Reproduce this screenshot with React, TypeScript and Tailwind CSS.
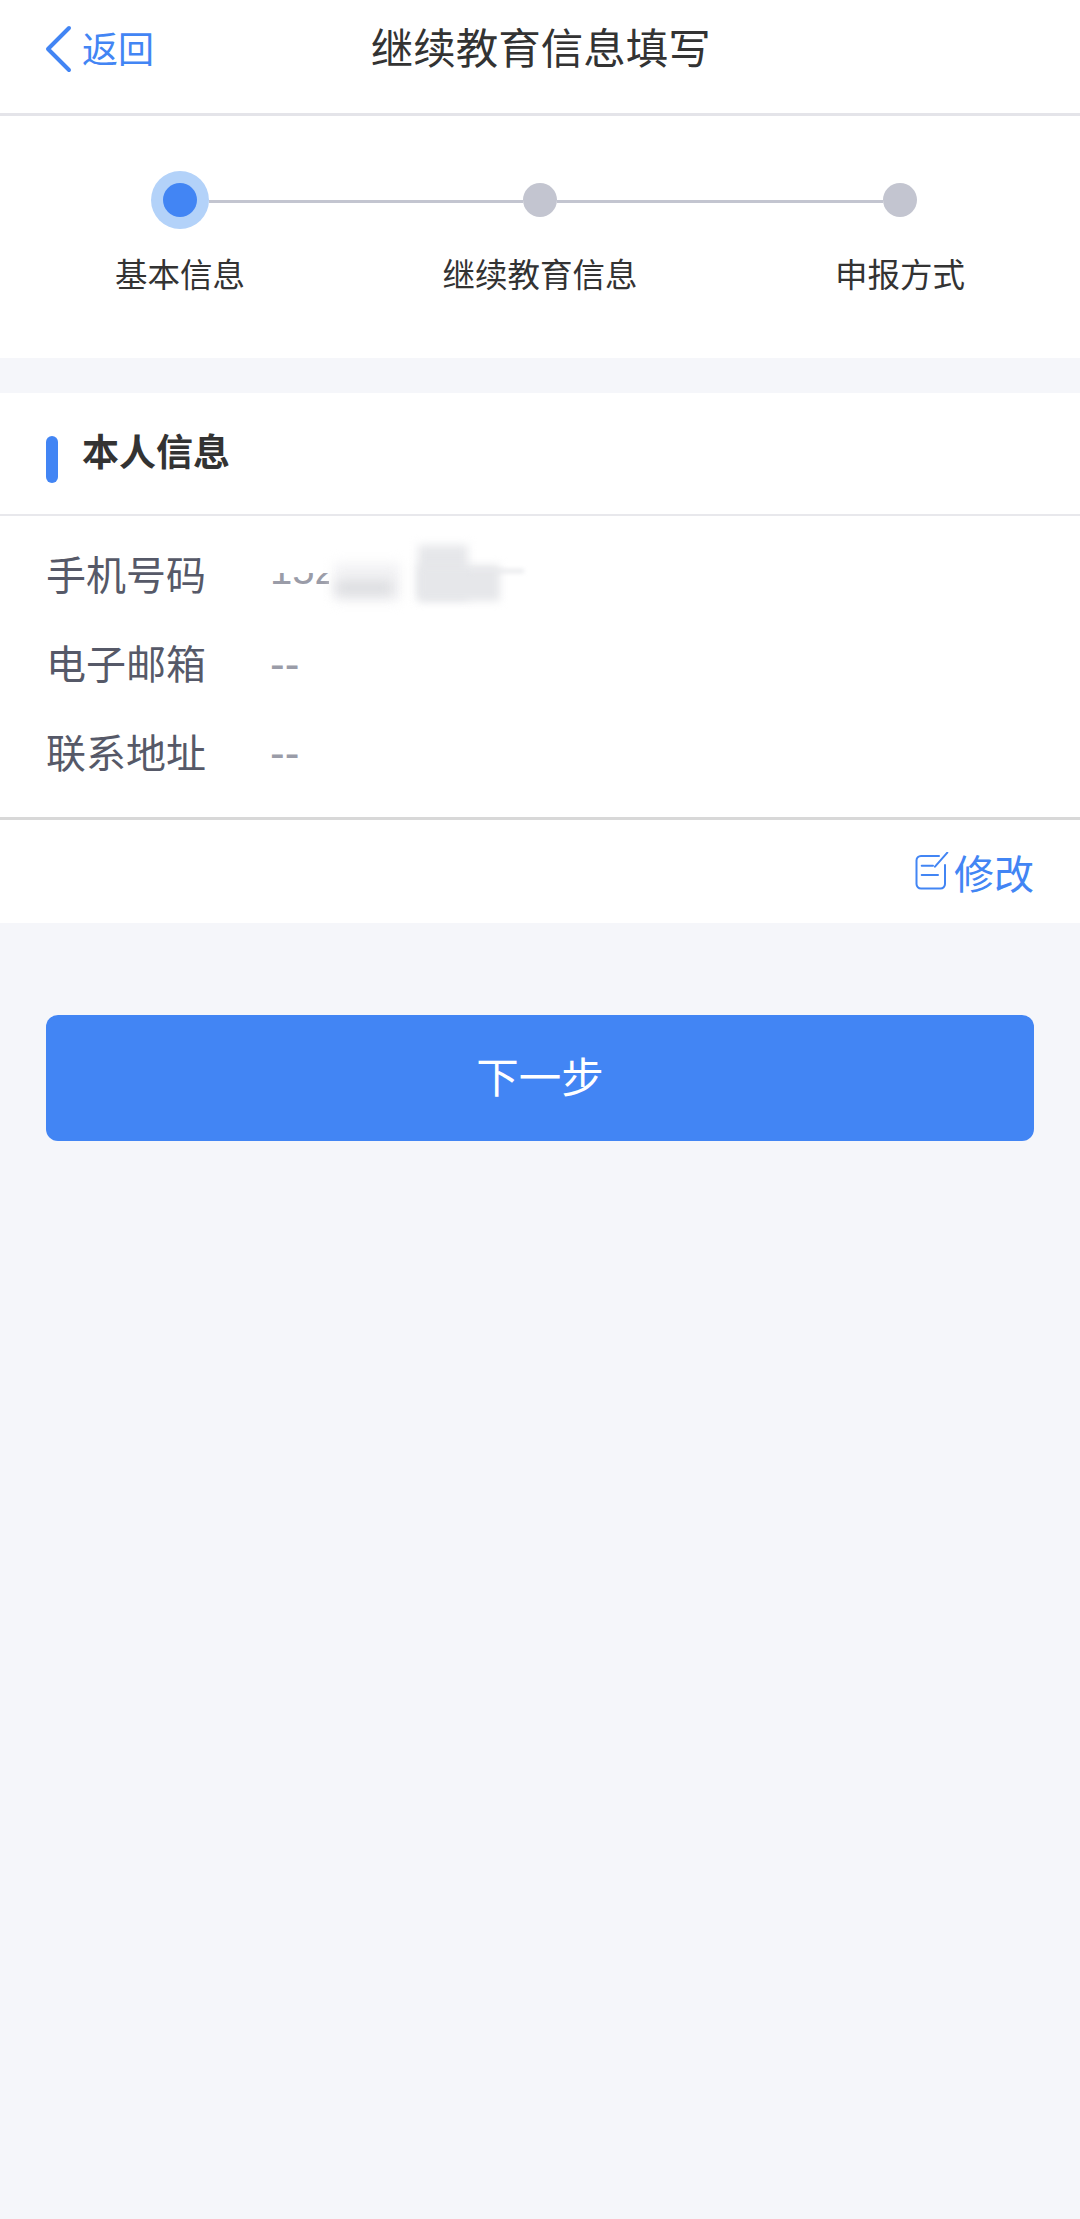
import React from 'react';

const FONT = '"Noto Sans CJK SC", "Noto Sans", sans-serif';

const steps = ['基本信息', '继续教育信息', '申报方式'];

const rows = [
    { label: '手机号码', value: '152' },
    { label: '电子邮箱', value: '--' },
    { label: '联系地址', value: '--' },
];

const App: React.FC = () => {
    return (
        <div className="min-h-[2219px] bg-[#f5f6fa]" style={{ fontFamily: FONT }}>
            {/* Top bar */}
            <header className="grid h-[116px] grid-cols-3 items-center border-b-[3px] border-[#e4e4e9] bg-white px-[44px] pb-[18px]">
                <div className="flex items-center text-[#4285f4]">
                    <svg className="mt-[2px]" width="28" height="48" viewBox="0 0 28 48" fill="none">
                        <path d="M25 3 L4 24 L25 45" stroke="#4285f4" strokeWidth="4" strokeLinecap="round" strokeLinejoin="round" />
                    </svg>
                    <span className="mb-[2px] ml-[10px] text-[36px] leading-none">返回</span>
                </div>
                <h1 className="mb-[3px] ml-[-4px] whitespace-nowrap text-[42.5px] font-normal leading-none text-[#333333]">继续教育信息填写</h1>
                <div />
            </header>

            {/* Steps */}
            <section className="h-[242px] bg-white pt-[55px]">
                <div className="flex items-center pl-[151px]">
                    <div className="flex h-[58px] w-[58px] items-center justify-center rounded-full bg-[#b3d2f9]">
                        <div className="h-[34px] w-[34px] rounded-full bg-[#4285f4]" />
                    </div>
                    <div className="mt-[2px] h-[3px] w-[314px] bg-[#c3c5d0]" />
                    <div className="h-[34px] w-[34px] rounded-full bg-[#c3c5d0]" />
                    <div className="mt-[2px] h-[3px] w-[326px] bg-[#c3c5d0]" />
                    <div className="h-[34px] w-[34px] rounded-full bg-[#c3c5d0]" />
                </div>
                <div className="mt-[21px] grid grid-cols-3">
                    {steps.map((step) => (
                        <div key={step} className="text-center text-[32.5px] leading-[46px] text-[#333333]">
                            {step}
                        </div>
                    ))}
                </div>
            </section>

            {/* Personal info */}
            <section className="mt-[35px] bg-white">
                <div className="flex h-[123px] items-center border-b-2 border-[#e8e8ec] pl-[46px]">
                    <div className="mt-[11px] h-[47px] w-[12px] rounded-full bg-[#4285f4]" />
                    <h2 className="mb-[7px] ml-[24px] text-[37px] font-bold leading-none text-[#333333]">本人信息</h2>
                </div>
                <div className="h-[304px] border-b-[3px] border-[#d8d8d8] px-[46px] pt-[15px]">
                    {rows.map((row, i) => (
                        <div key={row.label} className="flex h-[89px] items-center">
                            <span className="mb-[6px] w-[224px] text-[40px] leading-none text-[#565968]">{row.label}</span>
                            {i === 0 ? (
                                <div className="relative h-[89px] w-[300px]">
                                    <span className="absolute left-0 top-[14px] text-[40px] leading-[50px] text-[#9a9ca8]" style={{ fontFamily: '"Liberation Sans", sans-serif' }}>
                                        152
                                    </span>
                                    {/* masked part of the number */}
                                    <div className="absolute left-[-6px] top-[14px] h-[28px] w-[66px] bg-white" />
                                    <div className="absolute left-[59px] top-[10px] h-[64px] w-[170px] bg-white" />
                                    <div className="absolute left-[64px] top-[32px] h-[38px] w-[66px] bg-[#f2f2f4] blur-[6px]" />
                                    <div className="absolute left-[66px] top-[50px] h-[14px] w-[56px] bg-[#dcdde0] blur-[6px]" />
                                    <div className="absolute left-[148px] top-[14px] h-[54px] w-[50px] bg-[#e6e7ea] blur-[5px]" />
                                    <div className="absolute left-[148px] top-[34px] h-[36px] w-[82px] bg-[#e6e7ea] blur-[4px]" />
                                    <div className="absolute left-[200px] top-[38px] h-[4px] w-[54px] bg-[#e8e9ec] blur-[2px]" />
                                </div>
                            ) : (
                                <span className="mb-[1px] text-[44px] leading-none text-[#9a9ca8]" style={{ fontFamily: '"Liberation Sans", sans-serif' }}>{row.value}</span>
                            )}
                        </div>
                    ))}
                </div>
                <div className="flex h-[103px] items-center justify-end gap-[4px] px-[46px] text-[#4285f4]">
                    <svg width="36" height="40" viewBox="0 0 36 40" fill="none" stroke="#4285f4" strokeWidth="2" strokeLinecap="round">
                        <path d="M25 4 H7 a4.5 4.5 0 0 0 -4.5 4.5 V32 a4.5 4.5 0 0 0 4.5 4.5 H26.5 a4.5 4.5 0 0 0 4.5 -4.5 V13" />
                        <path d="M33.3 0.7 L21 14.7" />
                        <path d="M7.7 13.7 H19" />
                        <path d="M7.7 23 H24" />
                    </svg>
                    <span className="text-[40px] leading-none">修改</span>
                </div>
            </section>

            <div className="px-[46px] pt-[92px]">
                <button className="h-[126px] w-full rounded-[12px] bg-[#4285f4] pb-[6px] text-[42.5px] text-white">下一步</button>
            </div>
        </div>
    );
};

export default App;
